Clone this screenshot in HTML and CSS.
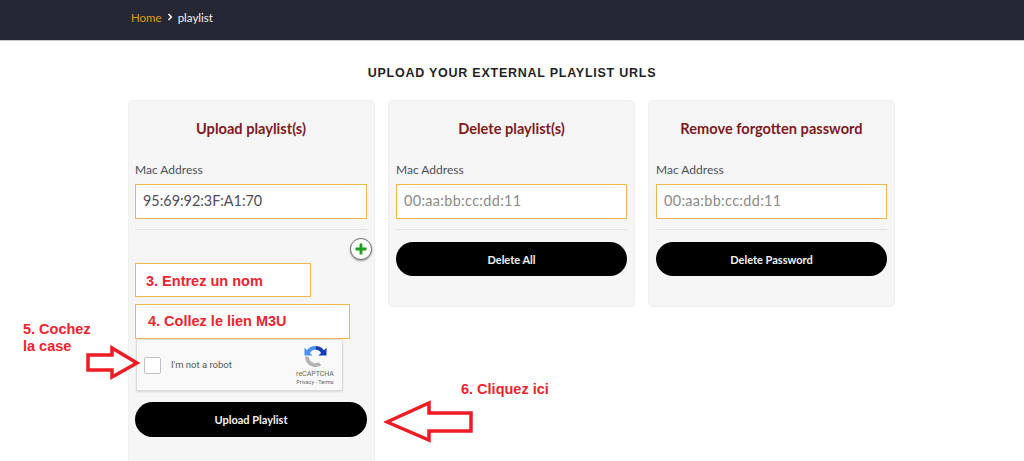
FILE: index.html
```html
<!DOCTYPE html>
<html lang="en">
<head>
    <meta charset="UTF-8">
    <meta name="viewport" content="width=device-width, initial-scale=1.0">
    <title>Playlist</title>
    <link rel="stylesheet" href="styles.css">
</head>
<body>

    <div class="topbar">
        <a class="crumb-home" href="#">Home</a>
        <svg class="crumb-sep" width="6" height="8" viewBox="0 0 6 8"><path d="M1.500 1l2.800 3-2.800 3" fill="none" stroke="#fff" stroke-width="1.500"/></svg>
        <span class="crumb-current">playlist</span>
    </div>

    <div class="page">
        <h1 class="page-title">UPLOAD YOUR EXTERNAL PLAYLIST URLS</h1>

        <div class="cards">
            <div class="card card-upload">
                <h2>Upload playlist(s)</h2>
                <label>Mac Address</label>
                <div class="field">95:69:92:3F:A1:70</div>
                <hr>
                <div class="add-row">
                    <span class="add-btn">
                        <svg width="14" height="14" viewBox="0 0 14 14"><path d="M7 1.500v11M1.500 7h11" stroke="#1f9d1f" stroke-width="2.800" fill="none"/></svg>
                    </span>
                </div>
                <div class="note-field note-name">3. Entrez un nom</div>
                <div class="note-field note-link">4. Collez le lien M3U</div>
                <div class="captcha">
                    <span class="captcha-box"></span>
                    <span class="captcha-text">I'm not a robot</span>
                    <div class="captcha-brand">
                        <svg width="23" height="23" viewBox="0 0 24 24">
                            <path d="M12 1A11 11 0 0 0 3.200 5.400L0.500 2.800V11H9L6.200 8.300A7 7 0 0 1 12 5z" fill="#4a90f0"/>
                            <path d="M12 1a11 11 0 0 1 8.800 4.400l2.700-2.600V11H15l2.800-2.700A7 7 0 0 0 12 5z" fill="#1a3fb0"/>
                            <path d="M1 12h4a7 7 0 0 0 10.500 6l2.500 3.200A11 11 0 0 1 1 12z" fill="#b4b4b4"/>
                        </svg>
                        <span class="captcha-name">reCAPTCHA</span>
                        <span class="captcha-links">Privacy - Terms</span>
                    </div>
                </div>
                <button class="pill-btn">Upload Playlist</button>
            </div>

            <div class="card">
                <h2>Delete playlist(s)</h2>
                <label>Mac Address</label>
                <div class="field placeholder">00:aa:bb:cc:dd:11</div>
                <hr>
                <button class="pill-btn pill-short">Delete All</button>
            </div>

            <div class="card">
                <h2>Remove forgotten password</h2>
                <label>Mac Address</label>
                <div class="field placeholder">00:aa:bb:cc:dd:11</div>
                <hr>
                <button class="pill-btn pill-short">Delete Password</button>
            </div>
        </div>
    </div>

    <!-- red notes drawn over the page -->
    <div class="note note-tick">5. Cochez<br>la case</div>
    <div class="note note-click">6. Cliquez ici</div>
    <svg class="arrow arrow-right" width="60" height="36" viewBox="0 0 60 36"><path d="M3 10h24V3l25 15-25 14v-7H3z" fill="#fff" stroke="#ee1c25" stroke-width="3.500"/></svg>
    <svg class="arrow arrow-left" width="92" height="44" viewBox="0 0 92 44"><path d="M3 22L45 3v10h42v18H45v9z" fill="#fff" stroke="#ee1c25" stroke-width="3.500"/></svg>

</body>
</html>
```

FILE: styles.css
```css
html, body {
    height: 461px;
}

body {
    font-family: 'Lato', 'Noto Sans', sans-serif;
    margin: 0;
    padding: 0;
    background: #fff;
    color: #4d4d5c;
    position: relative;
}

.topbar {
    background: #262734;
    height: 41px;
    padding: 0 0 6px 131px;
    display: flex;
    align-items: center;
    gap: 5px;
    font-size: 12px;
    box-sizing: border-box;
    border-bottom: 1px solid #c9c9c9;
}

.crumb-home {
    color: #e09a13;
    text-decoration: none;
    font-size: 11.500px;
}

.crumb-current {
    color: #f2f2f2;
    font-size: 11.500px;
}

.page-title {
    margin: 25px 0 0;
    text-align: center;
    font-family: 'Liberation Sans', sans-serif;
    font-size: 12.500px;
    line-height: 14px;
    letter-spacing: 0.75px;
    font-weight: bold;
    color: #1f1f26;
}

.cards {
    display: flex;
    align-items: flex-start;
    gap: 13px;
    margin: 20px 0 0 128px;
}

.card {
    width: 247px;
    height: 207px;
    box-sizing: border-box;
    background: #f6f6f6;
    border: 1px solid #f0f0f0;
    border-radius: 5px;
    padding: 0 7px;
}

.card-upload {
    height: 361px;
    padding-left: 6px;
    border-bottom: 0;
    border-radius: 5px 5px 0 0;
}

.card h2 {
    margin: 19px 0 0;
    text-align: center;
    font-size: 14.600px;
    line-height: 18px;
    font-weight: bold;
    color: #7d1a1f;
}

.card label {
    display: block;
    margin-top: 24px;
    font-size: 12px;
    line-height: 16px;
}

.field {
    margin-top: 6px;
    height: 35px;
    box-sizing: border-box;
    background: #fff;
    border: 1px solid #f0b84a;
    padding-left: 7px;
    font-size: 14.400px;
    line-height: 32px;
    color: #4d4d5c;
}

.placeholder {
    color: #8a8a8a;
    letter-spacing: 0.35px;
}

.card hr {
    margin: 10px 0 12px;
    border: 0;
    border-top: 1px solid #e4e4e4;
}

.add-row {
    display: flex;
    justify-content: flex-end;
    margin: -4px -5px 0 0;
}

.add-btn {
    width: 20px;
    height: 20px;
    background: #fff;
    border: 1px solid #777;
    border-radius: 50%;
    box-shadow: 0 1px 2px rgba(0, 0, 0, 0.4);
    display: flex;
    align-items: center;
    justify-content: center;
}

.note-field {
    box-sizing: border-box;
    background: #fff;
    border: 1px solid #f0b84a;
    font-family: 'Liberation Sans', sans-serif;
    font-size: 14.500px;
    font-weight: bold;
    color: #ee2330;
}

.note-name {
    width: 176px;
    height: 34px;
    margin-top: 3px;
    padding-left: 10px;
    line-height: 35px;
}

.note-link {
    width: 215px;
    height: 35px;
    margin-top: 7px;
    padding-left: 12px;
    line-height: 33px;
}

.captcha {
    width: 207px;
    height: 52px;
    box-sizing: border-box;
    margin-left: 1px;
    background: #f9f9f9;
    border: 1px solid #dcdcdc;
    border-radius: 2px;
    box-shadow: 0 1px 2px rgba(0, 0, 0, 0.12);
    display: flex;
    align-items: center;
    padding-left: 7px;
}

.captcha-box {
    width: 17px;
    height: 17px;
    box-sizing: border-box;
    background: #fff;
    border: 1px solid #c1c1c1;
    border-radius: 2px;
}

.captcha-text {
    margin: 0 0 2px 10px;
    font-family: 'Roboto', sans-serif;
    font-size: 9.500px;
    color: #555;
}

.captcha-brand {
    margin-left: auto;
    width: 44px;
    margin-right: 5px;
    display: flex;
    flex-direction: column;
    align-items: center;
    color: #666;
    font-family: 'Roboto', sans-serif;
}

.captcha-name {
    font-size: 7px;
    line-height: 10px;
    margin-top: 1px;
}

.captcha-links {
    font-size: 5.500px;
    line-height: 7px;
    white-space: nowrap;
}

.pill-btn {
    display: block;
    width: 100%;
    height: 35px;
    border: none;
    border-radius: 18px;
    background: #000;
    color: #f4f4f4;
    font-family: 'Lato', 'Noto Sans', sans-serif;
    font-size: 11px;
    font-weight: bold;
}

.pill-short {
    height: 34px;
}

.captcha + .pill-btn {
    margin-top: 11px;
}

.note {
    position: absolute;
    font-family: 'Liberation Sans', sans-serif;
    font-size: 14.500px;
    font-weight: bold;
    line-height: 17px;
    color: #ee2330;
}

.note-tick {
    left: 23px;
    top: 321px;
}

.note-click {
    left: 461px;
    top: 381px;
}

.arrow {
    position: absolute;
}

.arrow-right {
    left: 85px;
    top: 345px;
}

.arrow-left {
    left: 384px;
    top: 400px;
}
```
